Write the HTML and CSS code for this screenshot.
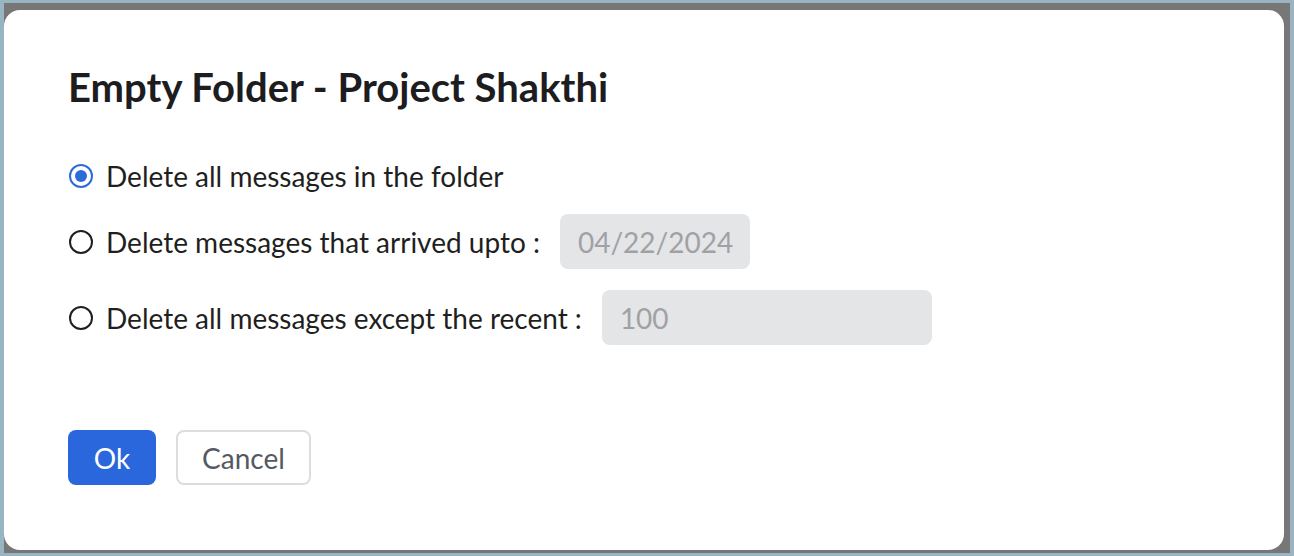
FILE: index.html
```html
<!DOCTYPE html>
<html lang="en">
<head>
<meta charset="utf-8">
<title>Empty Folder</title>
<link rel="stylesheet" href="styles.css">
</head>
<body>
<div class="backdrop">
  <div class="dialog">
    <h1 class="title">Empty Folder - Project Shakthi</h1>
    <div class="options">
      <label class="option">
        <span class="radio checked"></span>
        <span class="label">Delete all messages in the folder</span>
      </label>
      <label class="option">
        <span class="radio"></span>
        <span class="label">Delete messages that arrived upto :</span>
        <span class="field field-date">04/22/2024</span>
      </label>
      <label class="option">
        <span class="radio"></span>
        <span class="label">Delete all messages except the recent :</span>
        <span class="field field-count">100</span>
      </label>
    </div>
    <div class="actions">
      <button class="btn btn-primary">Ok</button>
      <button class="btn btn-secondary">Cancel</button>
    </div>
  </div>
</div>
</body>
</html>
```

FILE: styles.css
```css
* { box-sizing: border-box; }

html, body {
  margin: 0;
  padding: 0;
}

body {
  width: 1294px;
  height: 556px;
  background: #9ab5c2;
  font-family: Lato, "Open Sans", sans-serif;
  overflow: hidden;
  padding: 3px 4px 3px 4px;
}

.backdrop {
  width: 1286px;
  height: 550px;
  background: #777777;
  padding-top: 7px;
}

.dialog {
  width: 1280px;
  height: 540px;
  background: #ffffff;
  border-radius: 16px;
  padding: 53px 64px 0 64px;
  display: flex;
  flex-direction: column;
}

.title {
  margin: 0;
  font-size: 40px;
  font-weight: 700;
  color: #1d1d1f;
  line-height: 48px;
}

.options {
  display: flex;
  flex-direction: column;
  gap: 21px;
  margin-top: 48px;
}

.option {
  display: flex;
  align-items: center;
  min-height: 33px;
  font-size: 28px;
  color: #1f1f21;
}

.radio {
  width: 24px;
  height: 24px;
  border-radius: 50%;
  border: 2px solid #1f1f21;
  margin-left: 1px;
  margin-right: 13px;
  flex: none;
  display: flex;
  align-items: center;
  justify-content: center;
}

.radio.checked {
  border-color: #2d6bd9;
}

.radio.checked::after {
  content: "";
  width: 12px;
  height: 12px;
  border-radius: 50%;
  background: #2d6bd9;
}

.field {
  height: 55px;
  background: #e4e5e7;
  border-radius: 8px;
  color: #a1a1a5;
  display: flex;
  align-items: center;
  padding-left: 18px;
  margin-left: 20px;
}

.field-date { width: 190px; }
.field-count { width: 330px; }

.actions {
  display: flex;
  gap: 20px;
  margin-top: 85px;
}

.btn {
  height: 55px;
  border-radius: 8px;
  font-family: inherit;
  font-size: 28px;
  padding: 0;
  cursor: pointer;
}

.btn-primary {
  width: 88px;
  background: #2b67dc;
  color: #ffffff;
  border: none;
}

.btn-secondary {
  width: 135px;
  background: #ffffff;
  color: #555a62;
  border: 2px solid #dddddd;
}
```
